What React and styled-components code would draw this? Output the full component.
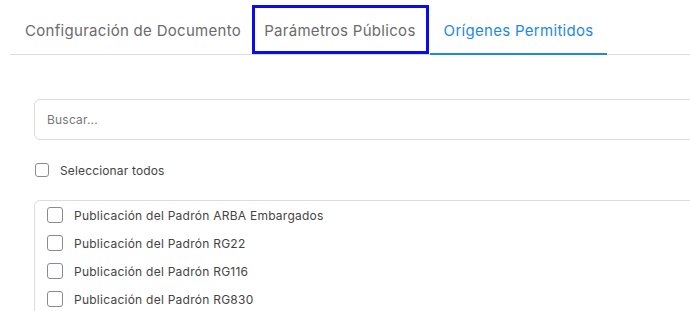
import React from "react";
import styled, { createGlobalStyle } from "styled-components";

const Global = createGlobalStyle`
  html, body { margin: 0; padding: 0; background: #fff; overflow: hidden; }
  body { font-family: Inter, "Noto Sans", sans-serif; }
`;

const Page = styled.div`
  width: 900px;
  padding: 4px 0 0 10px;
  box-sizing: border-box;
`;

const TabBar = styled.div`
  display: flex;
  border-bottom: 1px solid #dcdcdc;
  height: 51px;
  box-sizing: border-box;
`;

const Tab = styled.button`
  background: none;
  border: none;
  margin: 0;
  padding: 4px ${p => p.$pr}px 0 ${p => p.$pl}px;
  font-family: inherit;
  font-size: 15px;
  letter-spacing: 0.3px;
  color: ${p => (p.$active ? "#1e88e5" : "#6b6b6b")};
  border-bottom: 2px solid ${p => (p.$active ? "#1e88e5" : "transparent")};
  margin-bottom: -1px;
  outline: ${p => (p.$focus ? "3.5px solid #0b0bf0" : "none")};
  outline-offset: -4px;
  cursor: pointer;
  white-space: nowrap;
`;

const Body = styled.div`
  padding: 44px 0 0 24px;
  display: flex;
  flex-direction: column;
`;

const Search = styled.input`
  height: 41px;
  border: 1px solid #d9d9d9;
  border-radius: 6px;
  padding: 0 12px;
  font-family: inherit;
  font-size: 12px;
  letter-spacing: 0.2px;
  box-sizing: border-box;
  &::placeholder { color: #777; }
`;

const Check = styled.span`
  width: 14px;
  height: 14px;
  border: 1px solid #8a8a95;
  border-radius: 3px;
  box-sizing: border-box;
  flex-shrink: 0;
`;

const Label = styled.label`
  display: flex;
  align-items: center;
  gap: ${p => p.$gap}px;
  font-size: 12px;
  letter-spacing: ${p => p.$ls}px;
  color: #444;
  height: ${p => p.$h}px;
`;

const SelectAll = styled(Label)`
  margin: 22px 0 0 1px;
`;

const ListBox = styled.div`
  margin-top: 22px;
  border: 1px solid #dcdcdc;
  border-radius: 6px;
  padding: 0 12px;
  height: 200px;
  display: flex;
  flex-direction: column;
`;

const ItemCheck = styled(Check)`
  width: 16px;
  height: 16px;
`;

const items = [
  "Publicación del Padrón ARBA Embargados",
  "Publicación del Padrón RG22",
  "Publicación del Padrón RG116",
  "Publicación del Padrón RG830",
];

export default function App() {
  return (
    <>
      <Global />
      <Page>
        <TabBar>
          <Tab $pl={15} $pr={10}>Configuración de Documento</Tab>
          <Tab $pl={13} $pr={14} $focus>Parámetros Públicos</Tab>
          <Tab $pl={14} $pr={13} $active>Orígenes Permitidos</Tab>
        </TabBar>
        <Body>
          <Search placeholder="Buscar..." />
          <SelectAll $gap={11} $h={16} $ls={0.15}>
            <Check />
            Seleccionar todos
          </SelectAll>
          <ListBox>
            {items.map(t => (
              <Label key={t} $gap={11} $h={28} $ls={0.25}>
                <ItemCheck />
                {t}
              </Label>
            ))}
          </ListBox>
        </Body>
      </Page>
    </>
  );
}
